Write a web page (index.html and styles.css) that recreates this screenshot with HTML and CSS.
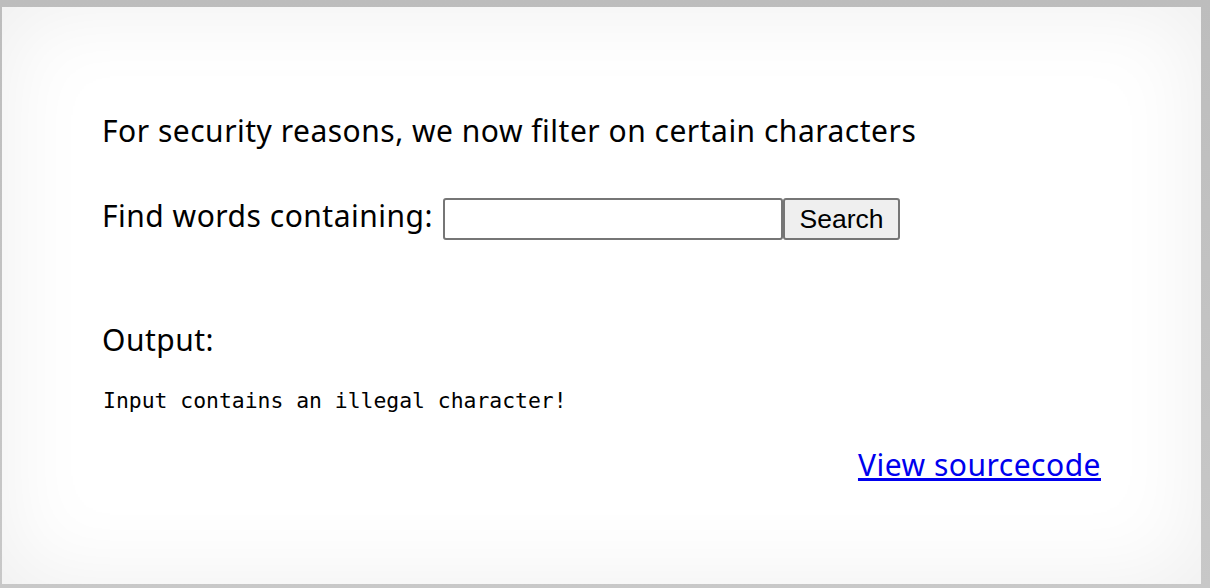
FILE: index.html
```html
<!DOCTYPE html>
<html>
<head>
<meta charset="utf-8">
<link rel="stylesheet" href="styles.css">
</head>
<body>
<div class="frame">
  <div class="content">
    <p class="lead">For security reasons, we now filter on certain characters</p>
    <form class="search">
      <label class="label">Find words containing:</label>
      <input class="field" type="text">
      <button class="btn" type="button">Search</button>
    </form>
    <p class="out-title">Output:</p>
    <pre class="out">Input contains an illegal character!</pre>
    <div class="src"><a href="#">View sourcecode</a></div>
  </div>
</div>
</body>
</html>
```
FILE: styles.css
```css
html, body {
  margin: 0;
  padding: 0;
  height: 100%;
}
body {
  background: #c4c4c4;
  font-family: "Noto Sans", sans-serif;
  color: #000;
}
.frame {
  padding: 7px 9px 4px 2px;
  height: 588px;
  box-sizing: border-box;
  background: linear-gradient(#bdbdbd, #c8c8c8);
}
.content {
  height: 577px;
  box-sizing: border-box;
  background: #fff;
  box-shadow: inset 0 0 90px rgba(0,0,0,0.07);
  padding: 104px 100px 0 100px;
  letter-spacing: 0.5px;
}
.lead {
  margin: 0;
  font-size: 30px;
  line-height: 40px;
}
.search {
  display: flex;
  align-items: flex-start;
  margin-top: 47px;
}
.label {
  font-size: 30px;
  line-height: 36px;
  margin-right: 10px;
}
.field {
  width: 340px;
  height: 42px;
  box-sizing: border-box;
  border: 2px solid #767676;
  border-radius: 3px;
  margin: 0;
  padding: 0;
  background: #fff;
}
.btn {
  height: 42px;
  width: 117px;
  box-sizing: border-box;
  margin: 0;
  border: 2px solid #767676;
  border-radius: 3px;
  background: #efefef;
  font-family: "Liberation Sans", Arial, sans-serif;
  font-size: 26.5px;
  letter-spacing: 0;
  color: #000;
  padding: 0;
}
.out-title {
  margin: 80px 0 0 0;
  font-size: 30px;
  line-height: 40px;
}
.out {
  margin: 26px 0 0 1px;
  font-family: "DejaVu Sans Mono", monospace;
  font-size: 21.4px;
  letter-spacing: 0;
  line-height: 30px;
  font-weight: normal;
}
.src {
  text-align: right;
  margin-top: 29px;
  font-size: 30px;
  line-height: 40px;
}
.src a {
  color: #0000ee;
}
```
